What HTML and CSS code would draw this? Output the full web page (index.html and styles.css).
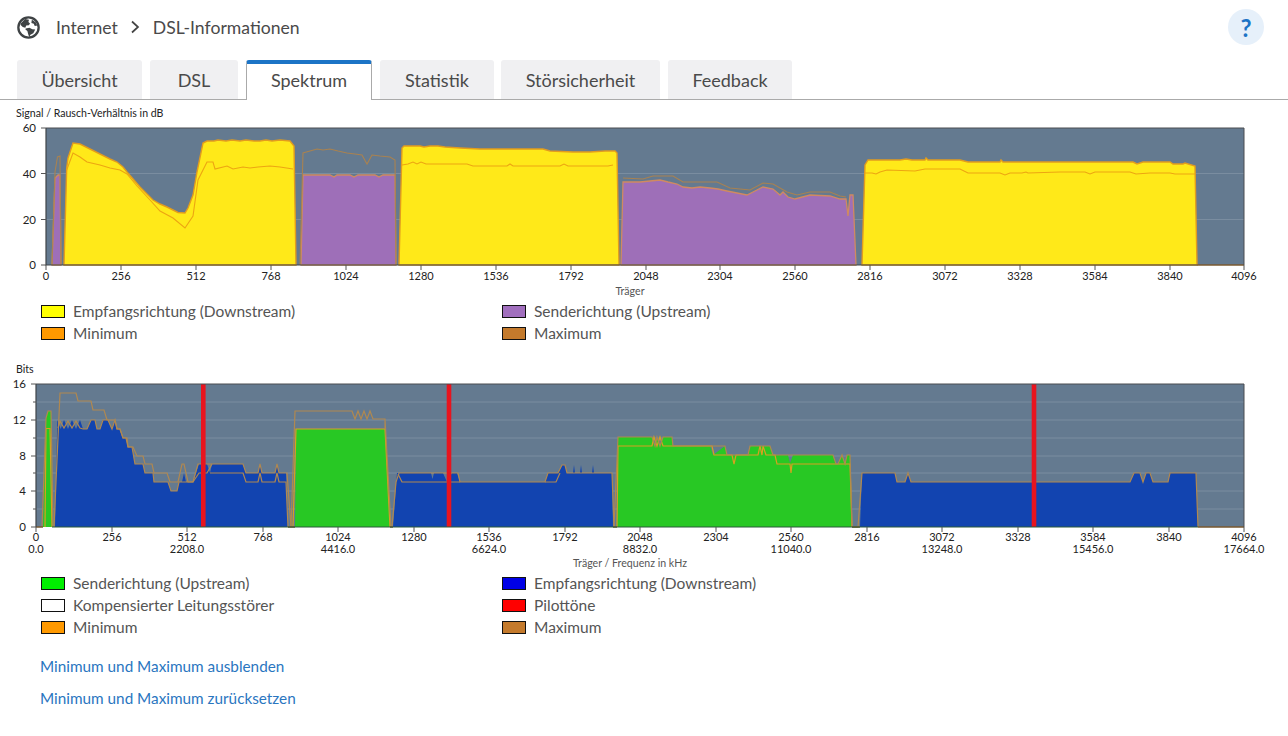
FILE: index.html
```html
<!DOCTYPE html>
<html lang="de">
<head>
<meta charset="utf-8">
<title>DSL-Informationen</title>
<link rel="stylesheet" href="styles.css">
</head>
<body>
<header class="topbar">
  <svg class="globe" viewBox="0 0 24 24" width="23" height="23"><circle cx="12" cy="12" r="10.6" fill="#fff" stroke="#3f4345" stroke-width="2.4"/><path d="M3.500 8 8.500 3l4 .8-.6 2.400 1.700 1.500-1.200 2-2.800.3-.9 2.300-2.700-.9-2.200-1.900z" fill="#3f4345"/><path d="M9 13 13 12.300l3 1.400 3 .4-2 4-3 1.400-1.200 2.800-1.100-3.300-.9-3.400-2-1.400z" fill="#3f4345"/><path d="M15.500 4 19.500 6.500l1.700 3.500-2.700.4-1-2.200-2.500-1z" fill="#3f4345"/></svg>
  <span class="crumb">Internet</span>
  <svg class="chev" viewBox="0 0 10 14" width="10" height="14"><path d="M2 1.500 8 7l-6 5.500" fill="none" stroke="#444" stroke-width="1.700"/></svg>
  <span class="crumb">DSL-Informationen</span>
  <button class="help" type="button">?</button>
</header>
<nav class="tabs">
  <a class="tab tab-1">Übersicht</a>
  <a class="tab tab-2">DSL</a>
  <a class="tab tab-3 active">Spektrum</a>
  <a class="tab tab-4">Statistik</a>
  <a class="tab tab-5">Störsicherheit</a>
  <a class="tab tab-6">Feedback</a>
</nav>
<main>
  <section class="chart first">
    <p class="chart-title">Signal / Rausch-Verhältnis in dB</p>
    <svg class="plot plot-a" viewBox="0 120 1288 178" width="1288" height="178">
      <rect x="46" y="128" width="1198" height="137" fill="#647a90"/>
      <path d="M46 173.500H1244M46 219.500H1244" stroke="#7a8da0" stroke-width="1"/>
      <!-- upstream -->
      <path class="up" d="M52 265 55 178 58 175 60 175 61 265Z"/>
      <path class="up" d="M301 265 303 175 330 175 334 177 337 175 350 175 354 177 358 175 375 175 379 177 383 175 395 175 396 265Z"/>
      <path class="up" d="M621 265 623 182 640 182 650 181 660 180 668 182 677 184 683 187 692 188 700 187 710 188 718 189 727 191 737 193 747 195 755 191 763 187 773 189 780 195 783 192 788 197 795 199 810 195 830 196 840 199 846 199 848 216 850 195 853 195 856 265Z"/>
      <!-- downstream -->
      <path class="dn" d="M64 265 66.700 168 68 158 73 143 80 144 90 149 100 154 110 159 117 162 123 167 127 172 140 187 153 200 160 204 167 207 178 212.500 185 213 188 208 193 195 197 172 203 143 207 141 214 141 218 140 226 141 232 140 240 141 246 140 254 141 260 141 266 140 272 141 280 140 290 141 294 146 296 265Z"/>
      <path class="dn" d="M399 265 402 148 404 146 420 146 424 147 430 146 438 146 445 147 460 148 480 149 543 149 550 151 573 152 590 152 605 151 615 151 617 153 619 265Z"/>
      <path class="dn" d="M862 265 865 165 868 160 900 160 906 159 912 160 925 160 926 158 928 160 960 160 968 162 1000 162 1001 160 1003 162 1133 162 1137 164 1143 162 1170 162 1173 164 1183 164 1185 163 1195 166 1197 265Z"/>
      <!-- minimum -->
      <path class="min" d="M66.700 170 73 153 80 157 87 162 100 165 110 168 120 170 127 174 137 186 150 200 160 211 173 218 185 228 193 216 198 180 207 162 213 162 215 169 227 166 233 169 243 167 250 168 258 167 270 166 280 167 293 169"/>
      <path class="min" d="M402 165 408 164 413 162 417 164 421 162 426 164 467 164 473 166 507 166 510 164 513 166 560 166 564 164 568 166 608 166 613 165"/>
      <path class="min" d="M865 173 872 173 876 174 880 172 887 170 915 171 925 169 960 169 968 173 1000 173 1005 175 1010 173 1022 173 1026 172 1028 173 1060 172 1085 172 1090 174 1095 172 1130 172 1136 174 1150 173 1170 173 1175 174 1195 174"/>
      <!-- maximum -->
      <path class="max" d="M52 265 55 172 57.500 157 60 156 61 265"/>
      <path class="max" d="M300 265 303 153 310 151 317 149 323 150 330 149 338 151 347 153 355 154 362 155 367 164 372 155 380 156 390 157 395 160 396 265"/>
      <path class="max" d="M623 178 643 179 653 176 673 176 683 182 717 182 730 188 750 190 763 183 773 184 787 192 797 195 810 192 830 192 840 196 846 197"/>
      <path class="edge" d="M1197 265H1244"/>
      <!-- frame + axes -->
      <path d="M46 128H1244V265" fill="none" stroke="#4a4d50" stroke-width="1"/>
      <path d="M46 128V265H1197" fill="none" stroke="#3f4448" stroke-width="1.200"/>
      <path class="tick" d="M41 128H46M41 173.500H46M41 219.500H46M41 265H46M46 265V270M121 265V270M196 265V270M271 265V270M346 265V270M421 265V270M496 265V270M571 265V270M646 265V270M720 265V270M795 265V270M870 265V270M945 265V270M1020 265V270M1095 265V270M1170 265V270M1244 265V270"/>
      <g class="ylab"><text x="36" y="132">60</text><text x="36" y="178">40</text><text x="36" y="224">20</text><text x="36" y="269">0</text></g>
      <g class="xlab"><text x="46" y="280">0</text><text x="121" y="280">256</text><text x="196" y="280">512</text><text x="271" y="280">768</text><text x="346" y="280">1024</text><text x="421" y="280">1280</text><text x="496" y="280">1536</text><text x="571" y="280">1792</text><text x="646" y="280">2048</text><text x="720" y="280">2304</text><text x="795" y="280">2560</text><text x="870" y="280">2816</text><text x="945" y="280">3072</text><text x="1020" y="280">3328</text><text x="1095" y="280">3584</text><text x="1170" y="280">3840</text><text x="1244" y="280">4096</text></g>
      <text class="axis-title" x="630" y="295">Träger</text>
    </svg>
    <ul class="legend">
      <li><i class="sw sw-yellow"></i>Empfangsrichtung (Downstream)</li>
      <li><i class="sw sw-purple"></i>Senderichtung (Upstream)</li>
      <li><i class="sw sw-orange"></i>Minimum</li>
      <li><i class="sw sw-brown"></i>Maximum</li>
    </ul>
  </section>
  <section class="chart second">
    <p class="chart-title">Bits</p>
    <svg class="plot plot-b" viewBox="0 376 1288 194" width="1288" height="194">
      <rect x="36" y="384" width="1208" height="143" fill="#647a90"/>
      <path d="M36 402H1244M36 420H1244M36 438H1244M36 456H1244M36 473H1244M36 491H1244M36 509H1244" stroke="#7a8da0" stroke-width="1"/>
      <!-- green -->
      <path class="g" d="M43 527 46 418 48 411 51 411 52.500 527Z"/>
      <path class="g" d="M295 527 296 429 385 429 390 527Z"/>
      <path class="g" d="M617 527 618 437 652 437 655 446 657 437 660 446 663 437 672 437 673 446 710 446 713 455 725 446 727 455 748 455 750 446 770 446 773 455 788 455 790 463 793 455 833 455 836 464 838 464 842 455 845 464 847 455 850 455 852 527Z"/>
      <!-- blue -->
      <path class="b" d="M55 527 57.300 420 60.700 429 64 420 68 429 72 420 76 429 80 420 83 429 87.300 429 90.700 420 95 420 97 429 100 429 102.700 420 108 420 111.700 429 115 420 117 429 120 429 123 438 126 438 128 447 132 447 135 464 143 464 145 473 153 473 154 482 168 482 171 491 177 491 179 482 182 482 184 473 186 482 193 482 199 464 207 464 210 473 212 464 243 464 246 473 258 473 260 464 262 473 275 473 277 464 279 473 286 473 288 527Z"/>
      <path class="b" d="M393 527 397 473 431 473 432.500 479 434 473 443 473 447 482 452 473 457 473 460 482 545 482 548 473 558 473 562 465 565 465 567 473 573 473 574 465 575 473 580 473 581 465 582 473 592 473 593 465 594 473 612 473 613 527Z"/>
      <path class="b" d="M860 527 862 473 895 473 897 482 905 482 908 473 911 482 1130 482 1134 473 1140 473 1143 482 1146 473 1150 473 1153 482 1168 482 1170 473 1196 473 1198 527Z"/>
      <!-- minimum -->
      <path class="min2" d="M45 527 46 428.500H50L52 527"/>
      <path class="min2" d="M293 527 296 429H385L390 527"/>
      <path class="min2" d="M617 527 618 446H652L654 437 657 446 660 437 663 446 668 446 673 446H712L714 455H732L734 464 736 455H758L760 446 762 455 763 446 766 455H775L777 464H790L791 473 792 464H850L852 527"/>
      <!-- maximum -->
      <path class="max2" d="M42 527 46 418 48 411 51 411 53 527"/>
      <path class="max2" d="M54 527 57 460 60 393H76L78 401H91L93 410H104L107 420H115L117 429H120L123 438H127L128 447H133L137 456H143L145 464H152L154 473H167L170 482H178L182 464H184L188 482H193L198 464H243L246 473H258L260 464 262 473H275L277 464 279 473H287L291 527"/>
      <path class="max2" d="M58 428 60 421 64 428 68 421 72 428 76 421 80 428 83 429H87L91 420 95 420 97 429H100L103 420H108L112 429 115 420 117 429H120L123 438H126L128 447H132L135 464H143L145 473H153L154 482H168L171 491H177L179 482H193L199 473H207L212 464M210 473 212 473H243L246 482H258L260 473 262 482H275L277 473 279 482H286L288 527"/>
      <path class="max2" d="M291 527 295 411H352L355 419 358 411 361 419 364 411 367 419 370 411 373 419H385V429M385 419 391 527"/>
      <path class="max2" d="M392 527 396 482 399 473H443L452 473 458 473 460 482H545L548 473 558 473 562 465 565 465 567 473H612L614 527"/>
      <path class="max2" d="M398 474 402 482H447L452 482 460 482M545 482H556L560 473"/>
      <path class="max2" d="M614 527 618 437H652L655 446 657 437 660 446 663 437 672 437 673 446H725L727 455H748L750 446H770L773 455H833L836 464 838 464 842 455 845 464 847 455H850L852 527"/>
      <path class="max2" d="M852 527H858L862 473H895L897 482H905L908 473 911 482H1130L1134 473H1140L1143 482 1146 473H1150L1153 482H1168L1170 473H1196L1198 527"/>
      <path class="edge" d="M36 527H43M1198 527H1244M288 527H295M390 527H393M613 527H617M852 527H860"/>
      <!-- pilot tones -->
      <path class="pilot" d="M203.300 384V527M449 384V527M1034 384V527"/>
      <!-- frame + axes -->
      <path d="M36 384H1244V527" fill="none" stroke="#4a4d50" stroke-width="1"/>
      <path d="M36 384V527" fill="none" stroke="#3f4448" stroke-width="1.200"/>
      <path d="M52 527H1198" stroke="#2a5a3a" stroke-width="1.200"/>
      <path class="tick" d="M31 384H36M33 402H36M31 420H36M33 438H36M31 456H36M33 473H36M31 491H36M33 509H36M31 527H36M36 527V532M112 527V532M187 527V532M263 527V532M338 527V532M414 527V532M489 527V532M565 527V532M640 527V532M716 527V532M791 527V532M867 527V532M942 527V532M1018 527V532M1093 527V532M1169 527V532M1244 527V532"/>
      <g class="ylab"><text x="26" y="388">16</text><text x="26" y="424">12</text><text x="26" y="460">8</text><text x="26" y="495">4</text><text x="26" y="531">0</text></g>
      <g class="xlab"><text x="36" y="541">0</text><text x="112" y="541">256</text><text x="187" y="541">512</text><text x="263" y="541">768</text><text x="338" y="541">1024</text><text x="414" y="541">1280</text><text x="489" y="541">1536</text><text x="565" y="541">1792</text><text x="640" y="541">2048</text><text x="716" y="541">2304</text><text x="791" y="541">2560</text><text x="867" y="541">2816</text><text x="942" y="541">3072</text><text x="1018" y="541">3328</text><text x="1093" y="541">3584</text><text x="1169" y="541">3840</text><text x="1244" y="541">4096</text></g>
      <g class="xlab"><text x="36" y="553">0.0</text><text x="187" y="553">2208.0</text><text x="338" y="553">4416.0</text><text x="489" y="553">6624.0</text><text x="640" y="553">8832.0</text><text x="791" y="553">11040.0</text><text x="942" y="553">13248.0</text><text x="1093" y="553">15456.0</text><text x="1244" y="553">17664.0</text></g>
      <text class="axis-title" x="630" y="567">Träger / Frequenz in kHz</text>
    </svg>
    <ul class="legend">
      <li><i class="sw sw-green"></i>Senderichtung (Upstream)</li>
      <li><i class="sw sw-blue"></i>Empfangsrichtung (Downstream)</li>
      <li><i class="sw sw-white"></i>Kompensierter Leitungsstörer</li>
      <li><i class="sw sw-red"></i>Pilottöne</li>
      <li><i class="sw sw-orange"></i>Minimum</li>
      <li><i class="sw sw-brown"></i>Maximum</li>
    </ul>
  </section>
  <div class="links">
    <a class="link">Minimum und Maximum ausblenden</a>
    <a class="link">Minimum und Maximum zurücksetzen</a>
  </div>
</main>
</body>
</html>
```
FILE: styles.css
```css
* { box-sizing: border-box; }
html, body { margin: 0; padding: 0; }
body {
  width: 1288px;
  height: 736px;
  overflow: hidden;
  background: #fff;
  color: #4a4a4a;
  font-family: "Lato", "Noto Sans", sans-serif;
  font-size: 16px;
}
.topbar {
  height: 60px;
  display: flex;
  align-items: center;
  padding: 0 24px 6px 17px;
}
.globe { margin-right: 16px; }
.crumb { font-size: 17.6px; color: #4a4a4a; }
.chev { margin: 0 13px 0 12px; }
.help {
  margin-left: auto;
  width: 36px;
  height: 36px;
  border: 0;
  padding: 0;
  border-radius: 50%;
  background: #e6f0fa;
  color: #1c74c6;
  font: 700 24px "Lato", sans-serif;
}
.tabs {
  height: 40px;
  display: flex;
  gap: 8px;
  padding-left: 17px;
  border-bottom: 1px solid #aaa;
}
.tab {
  height: 39px;
  display: flex;
  align-items: center;
  justify-content: center;
  font-size: 18px;
  color: #4a4a4a;
  background: #f0f0f2;
  border-radius: 3px 3px 0 0;
}
.tab-1 { width: 125px; }
.tab-2 { width: 88px; }
.tab-3 { width: 126px; }
.tab-4 { width: 114px; }
.tab-5 { width: 159px; margin-left: -1px; }
.tab-6 { width: 124px; }
.tab.active {
  height: 40px;
  padding-bottom: 5px;
  background: #fff;
  border: 1px solid #aaa;
  border-bottom: 0;
  border-top: 4px solid #1c74c6;
  position: relative;
  z-index: 1;
}
.chart-title {
  margin: 0;
  height: 14px;
  line-height: 14px;
  padding-left: 16px;
  font-size: 10.6px;
  color: #222;
}
.first .chart-title { margin-top: 6px; }
.second .chart-title { margin-top: 18px; }
.plot { display: block; }
.up { fill: #9e6fb8; stroke: #d08a60; stroke-width: 1.3; }
.dn { fill: #ffe919; stroke: #e29c1e; stroke-width: 1.4; }
.g { fill: #28c824; }
.b { fill: #1244b0; }
.min { fill: none; stroke: #eda512; stroke-width: 1.1; }
.max { fill: none; stroke: #a98250; stroke-width: 1.1; }
.min2 { fill: none; stroke: #d8a020; stroke-width: 1.2; }
.max2 { fill: none; stroke: #b08850; stroke-width: 1.2; }
.edge { fill: none; stroke: #7a5a30; stroke-width: 1.5; }
.pilot { stroke: #e8141e; stroke-width: 4.6; fill: none; }
.tick { stroke: #555; stroke-width: 1; fill: none; }
.ylab text { font-size: 11.5px; text-anchor: end; fill: #222; }
.xlab text { font-size: 11px; text-anchor: middle; fill: #222; }
.axis-title { font-size: 10.6px; text-anchor: middle; fill: #555; }
.legend {
  list-style: none;
  margin: 2px 0 0;
  padding: 0 0 0 41px;
  display: grid;
  grid-template-columns: 461px 1fr;
  grid-auto-rows: 22px;
}
.legend li { display: flex; align-items: center; font-size: 15.5px; color: #555; }
.sw {
  width: 24px;
  height: 13px;
  margin-right: 8px;
  border: 1px solid #111;
}
.sw-yellow { background: #ffff00; }
.sw-purple { background: #a16fbe; }
.sw-orange { background: #ff9900; }
.sw-brown { background: #c47a2c; }
.sw-green { background: #00ee00; }
.sw-blue { background: #0000e6; }
.sw-white { background: #fff; }
.sw-red { background: #ff0000; }
.links {
  display: flex;
  flex-direction: column;
  gap: 8px;
  margin-top: 16px;
  padding-left: 40px;
}
.link { height: 24px; line-height: 24px; font-size: 15.3px; color: #2a76bf; }
```
